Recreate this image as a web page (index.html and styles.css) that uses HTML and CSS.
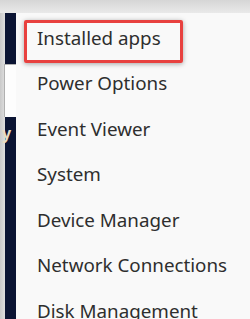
FILE: index.html
```html
<!DOCTYPE html>
<html>
<head>
<meta charset="utf-8">
<link rel="stylesheet" href="styles.css">
</head>
<body>
<div class="top"></div>
<div class="main">
  <div class="side">
    <div class="grey"></div>
    <div class="navy">
      <div class="whitebox"></div>
      <div class="letter">y</div>
    </div>
  </div>
  <ul class="menu">
    <li class="item selected">Installed apps</li>
    <li class="item">Power Options</li>
    <li class="item">Event Viewer</li>
    <li class="item">System</li>
    <li class="item">Device Manager</li>
    <li class="item">Network Connections</li>
    <li class="item">Disk Management</li>
  </ul>
</div>
</body>
</html>
```
FILE: styles.css
```css
html, body {
  margin: 0;
  padding: 0;
}
body {
  width: 250px;
  height: 319px;
  overflow: hidden;
  background: #f9f9f9;
  font-family: "Noto Sans", "Open Sans", sans-serif;
}
.top {
  height: 13px;
  background: linear-gradient(#d6d6d6, #e9e9e9);
}
.main {
  display: flex;
  height: 306px;
}
.side {
  display: flex;
  width: 16px;
  flex: none;
}
.grey {
  width: 5px;
  background: linear-gradient(90deg, #c9c9c9, #dedede);
}
.navy {
  width: 11px;
  background: #0b1433;
  padding-top: 51px;
  box-sizing: border-box;
}
.whitebox {
  height: 52px;
  background: #fdfdfd;
  border-left: 1px solid #b0b0b0;
  border-top: 1px solid #b0b0b0;
  margin-left: -1px;
}
.letter {
  color: #e8dcc4;
  font-weight: bold;
  font-size: 16px;
  line-height: 16px;
  margin-top: 8px;
  margin-left: -3px;
}
.menu {
  flex: 1;
  list-style: none;
  margin: 0;
  padding: 0;
  background: #f9f9f9;
  border-top-left-radius: 6px;
  overflow: hidden;
}
.item {
  height: 45.5px;
  line-height: 41.5px;
  padding-left: 21px;
  font-size: 18.8px;
  color: #2e2e2e;
  white-space: nowrap;
}
.item.selected {
  margin: 7px 67px 0 8px;
  height: 30px;
  line-height: 30px;
  padding: 0 0 7px 10px;
  border: 3px solid #e8413f;
  border-radius: 2px;
  box-shadow: 0 1px 5px rgba(0,0,0,0.35);
}
```
